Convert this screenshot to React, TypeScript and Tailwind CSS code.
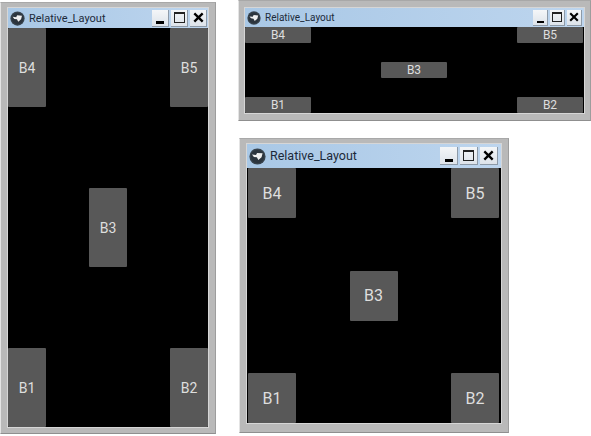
import React from "react";

type Size = "sm" | "md" | "lg";

function KivyIcon({ size }: { size: number }) {
  return (
    <svg width={size} height={size} viewBox="0 0 16 16" className="shrink-0">
      <circle cx="8" cy="8" r="7.6" fill="#37424c" />
      <circle cx="8" cy="8" r="6.2" fill="#2c353e" />
      <path d="M2.8 6.2 L6.6 6.6 L7.6 4.6 L12.8 5 L11.8 8.8 L8.8 11.4 L7.4 8.8 L4.6 8.4 Z" fill="#f0f0f0" />
    </svg>
  );
}

function CaptionButtons({ size }: { size: Size }) {
  const box = {
    sm: "w-[15px] h-[16px]",
    md: "w-[17px] h-[17px]",
    lg: "w-[18px] h-[18px]",
  }[size];
  const face = "flex items-center justify-center bg-gradient-to-b from-[#f4f6f8] to-[#dde3ea] border-r border-b border-[#8d9aa8]";
  const maxBox = size === "sm" ? "w-[10px] h-[10px]" : "w-[11px] h-[11px]";
  return (
    <div className="flex gap-[2px]">
      <div className={`${box} ${face} items-end`}>
        <div className={size === "sm" ? "w-[7px] h-[2px] bg-black mb-[2px]" : "w-[8px] h-[3px] bg-black mb-[2px]"} />
      </div>
      <div className={`${box} ${face}`}>
        <div className={`${maxBox} border border-[#222] border-t-2`} />
      </div>
      <div className={`${box} ${face}`}>
        <svg width={size === "sm" ? 10 : 11} height={size === "sm" ? 10 : 11} viewBox="0 0 10 10">
          <path d="M1.2 1.2 L8.8 8.8 M8.8 1.2 L1.2 8.8" stroke="#000" strokeWidth="2.1" />
        </svg>
      </div>
    </div>
  );
}

function KivyButton({ label, className, textClass }: { label: string; className: string; textClass: string }) {
  return (
    <div
      className={`flex items-center justify-center bg-[#585858] text-[#dedede] rounded-[1px] font-['Roboto',sans-serif] ${className} ${textClass}`}
    >
      {label}
    </div>
  );
}

function Window({
  className,
  titleClass,
  labelClass,
  iconSize,
  btn,
  textClass,
  clientPad,
  size,
}: {
  className: string;
  titleClass: string;
  labelClass: string;
  iconSize: number;
  btn: string;
  textClass: string;
  clientPad: string;
  size: Size;
}) {
  return (
    <div
      className={`absolute bg-[#b9b9b9] border border-t-[#a8a8a8] border-l-[#e4e4e4] border-r-[#9d9d9d] border-b-[#8f8f8f] ${className}`}
    >
      <div className="h-full flex flex-col ring-1 ring-[#d6d6d6]">
        <div className={`flex items-center justify-between bg-gradient-to-r from-[#a9c8e6] to-[#bdd5ee] ${titleClass}`}>
          <div className="flex items-center gap-[4px]">
            <KivyIcon size={iconSize} />
            <span className={`font-['Roboto',sans-serif] text-[#1c2a3a] leading-none ${labelClass}`}>
              Relative_Layout
            </span>
          </div>
          <CaptionButtons size={size} />
        </div>
        <div className={`flex-1 min-h-0 flex flex-col justify-between bg-black ${clientPad}`}>
          <div className="flex justify-between">
            <KivyButton label="B4" className={btn} textClass={textClass} />
            <KivyButton label="B5" className={btn} textClass={textClass} />
          </div>
          <div className="flex justify-center">
            <KivyButton label="B3" className={btn} textClass={textClass} />
          </div>
          <div className="flex justify-between">
            <KivyButton label="B1" className={btn} textClass={textClass} />
            <KivyButton label="B2" className={btn} textClass={textClass} />
          </div>
        </div>
      </div>
    </div>
  );
}

export default function App() {
  return (
    <div className="relative w-[591px] h-[436px] bg-white overflow-hidden">
      <Window
        className="left-0 top-[2px] w-[216px] h-[432px] pt-[5px] pb-[6px] px-[7px]"
        titleClass="h-[20px] pl-[2px] pr-[1px]"
        labelClass="text-[11px]"
        iconSize={15}
        btn="w-[38px] h-[79px]"
        textClass="text-[14px] pt-[2px]"
        clientPad=""
        size="md"
      />
      <Window
        className="left-[238px] top-0 w-[353px] h-[121px] pt-[7px] pb-[7px] px-[6px]"
        titleClass="h-[19px] pl-[2px] pr-[2px]"
        labelClass="text-[10px]"
        iconSize={14}
        btn="w-[66px] h-[16px]"
        textClass="text-[12px]"
        clientPad="pr-[1px]"
        size="sm"
      />
      <Window
        className="left-[239px] top-[138px] w-[270px] h-[295px] pt-[5px] pb-[9px] px-[7px]"
        titleClass="h-[24px] pl-[2px] pr-[3px]"
        labelClass="text-[12.5px]"
        iconSize={17}
        btn="w-[48px] h-[50px]"
        textClass="text-[16px] pt-[1px]"
        clientPad="pl-[1px] pr-[2px]"
        size="lg"
      />
    </div>
  );
}
